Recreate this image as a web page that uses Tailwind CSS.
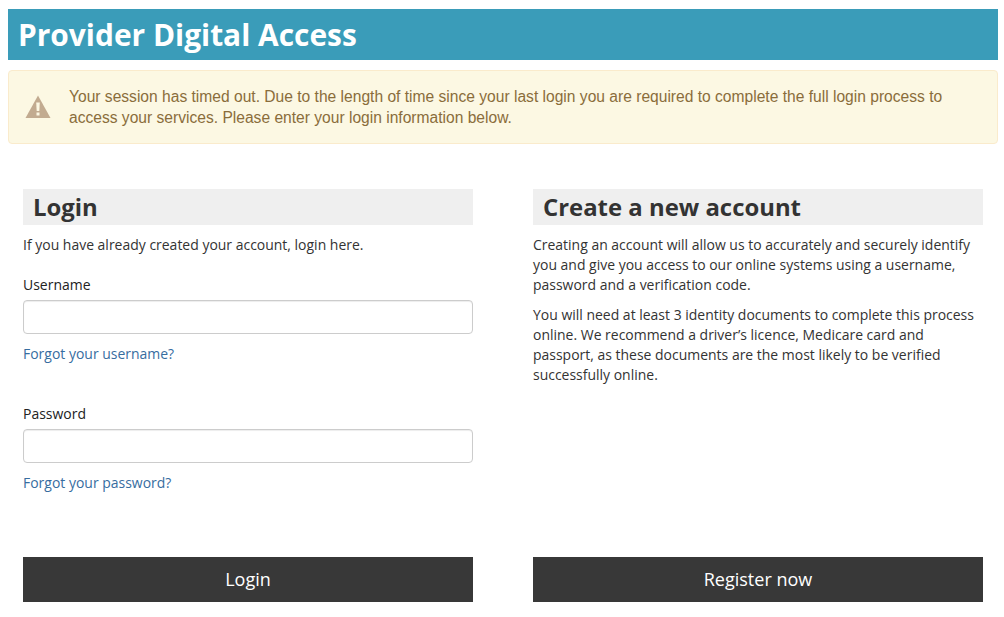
<!DOCTYPE html>
<html lang="en">
<head>
  <meta charset="UTF-8">
  <title>Provider Digital Access</title>
  <script src="https://cdn.jsdelivr.net/npm/@tailwindcss/browser@4"></script>
</head>
<body class="bg-white font-['Open_Sans',sans-serif] text-[13.97px] leading-[20px] text-[#333]">
  <div class="pt-[9px] pl-[8px] pr-[6px]">
    <header class="h-[51px] bg-[#3a9cb9] pl-[10px]">
      <h1 class="text-[29.9px] leading-[51px] font-bold text-white">Provider Digital Access</h1>
    </header>

    <div class="mt-[10px] h-[74px] flex items-center rounded-[4px] border border-[#faebcc] bg-[#fcf8e3] pl-[16px] pr-[40px] font-['Liberation_Sans',sans-serif] text-[#8a6d3b]">
      <svg class="w-[26px] h-[24px] shrink-0" viewBox="0 0 26 24">
        <path fill="#c2ab90" d="M13 0.5 L25.5 23 L0.5 23 Z"/>
        <path fill="#fcf8e3" d="M11.2 7.5 H14.8 L14.3 16 H11.7 Z"/>
        <rect x="11.5" y="17.5" width="3" height="3" fill="#fcf8e3"/>
      </svg>
      <p class="ml-[18px] text-[15.6px] leading-[21px]">Your session has timed out. Due to the length of time since your last login you are required to complete the full login process to access your services. Please enter your login information below.</p>
    </div>
  </div>

  <main class="mt-[45px] px-[23px] grid grid-cols-[450px_450px] gap-x-[60px]">
    <section class="h-[413px] flex flex-col">
      <h2 class="h-[36px] bg-[#efefef] pl-[10px] text-[23.9px] leading-[36px] font-bold text-[#333]">Login</h2>
      <p class="mt-[10px]">If you have already created your account, login here.</p>

      <label class="mt-[20px] block text-[#222]">Username</label>
      <input type="text" class="mt-[5px] h-[34px] w-full rounded-[4px] border border-[#ccc] bg-white shadow-[inset_0_1px_1px_rgba(0,0,0,0.075)]">
      <a href="#" class="mt-[10px] text-[#376d9f]">Forgot your username?</a>

      <label class="mt-[40px] block text-[#222]">Password</label>
      <input type="password" class="mt-[5px] h-[34px] w-full rounded-[4px] border border-[#ccc] bg-white shadow-[inset_0_1px_1px_rgba(0,0,0,0.075)]">
      <a href="#" class="mt-[10px] text-[#376d9f]">Forgot your password?</a>

      <button class="mt-auto h-[45px] w-full bg-[#383838] pb-[2px] text-[18px] text-white">Login</button>
    </section>

    <section class="h-[413px] flex flex-col">
      <h2 class="h-[36px] bg-[#efefef] pl-[10px] text-[23.9px] leading-[36px] font-bold text-[#333]">Create a new account</h2>
      <p class="mt-[10px]">Creating an account will allow us to accurately and securely identify you and give you access to our online systems using a username, password and a verification code.</p>
      <p class="mt-[10px]">You will need at least 3 identity documents to complete this process online. We recommend a driver’s licence, Medicare card and passport, as these documents are the most likely to be verified successfully online.</p>

      <button class="mt-auto h-[45px] w-full bg-[#383838] pb-[2px] text-[18px] text-white">Register now</button>
    </section>
  </main>
</body>
</html>
